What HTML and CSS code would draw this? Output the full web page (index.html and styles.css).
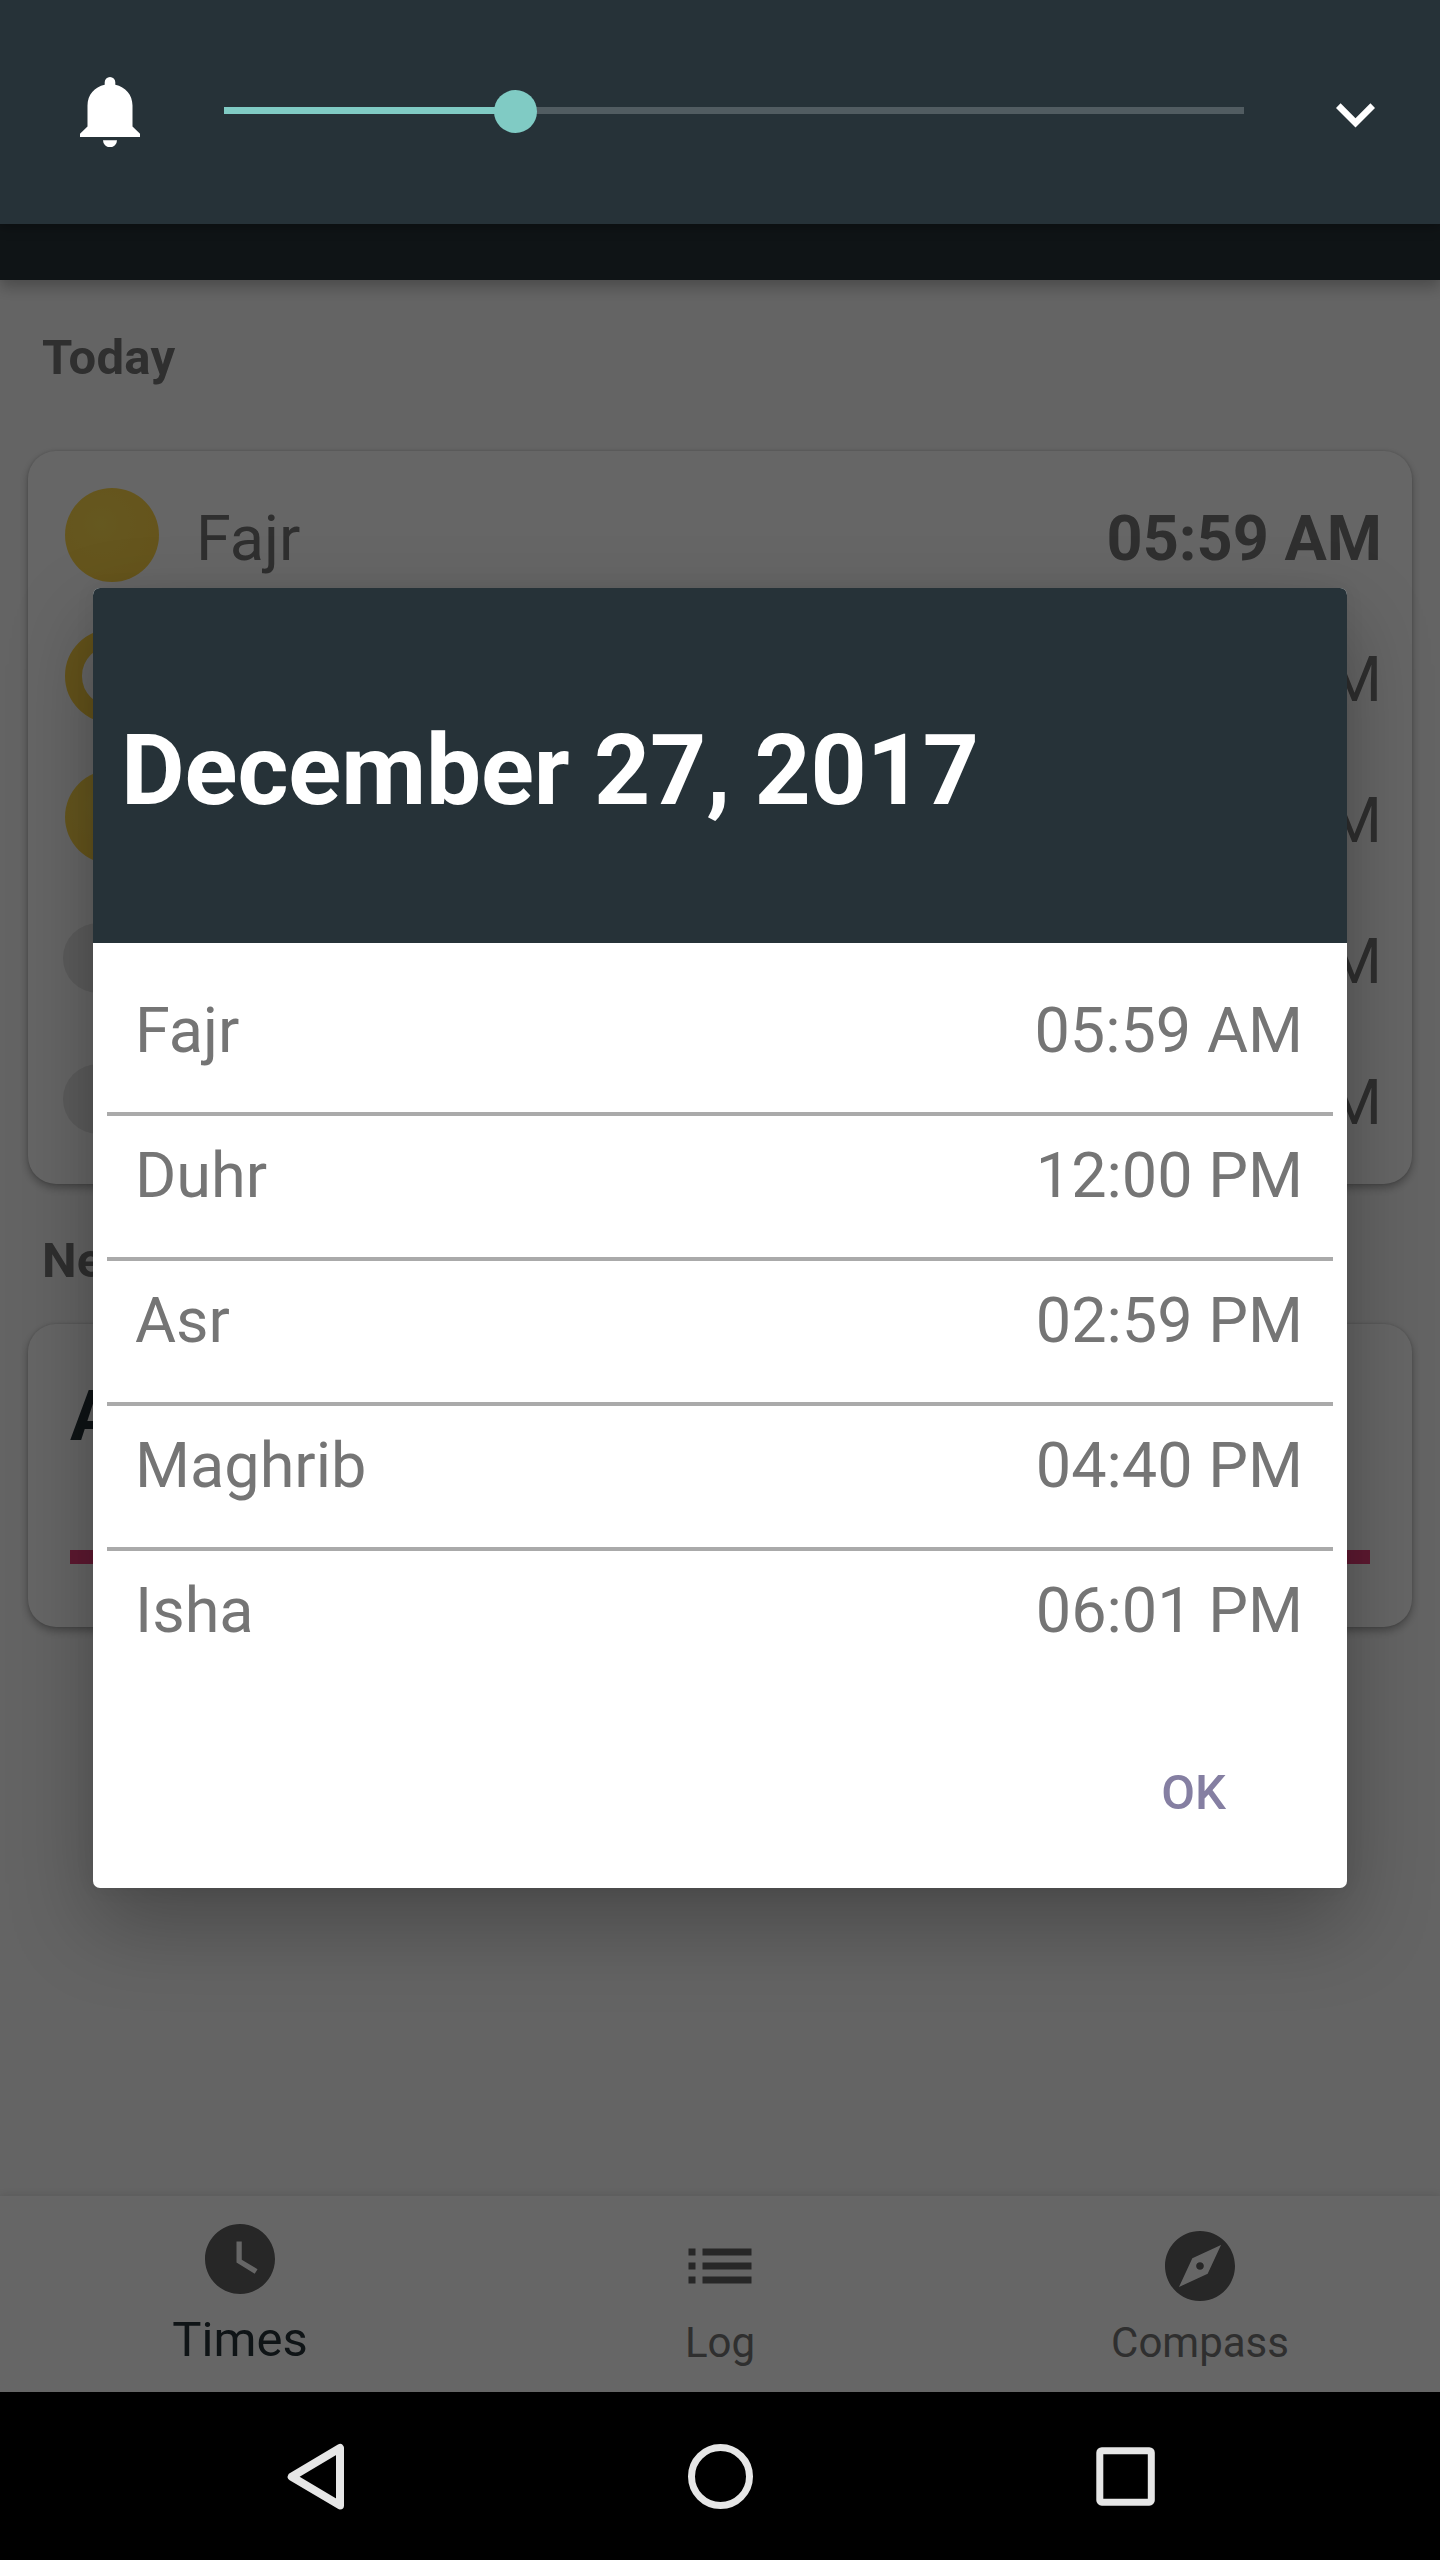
FILE: index.html
```html
<!DOCTYPE html>
<html lang="en">
<head>
<meta charset="utf-8">
<title>Prayer times</title>
<link rel="stylesheet" href="styles.css">
</head>
<body>
<div class="screen">
  <div class="app">
    <header class="toolbar"></header>
    <main class="content">
      <h2 class="section-title">Today</h2>
      <section class="card times-card">
        <div class="time-row current"><span class="mark"><i class="dot full"></i></span><span class="name">Fajr</span><span class="time">05:59 AM</span></div>
        <div class="time-row"><span class="mark"><i class="dot ring"></i></span><span class="time">PM</span></div>
        <div class="time-row"><span class="mark"><i class="dot full"></i></span><span class="time">PM</span></div>
        <div class="time-row"><span class="mark"><i class="dot empty"></i></span><span class="time">PM</span></div>
        <div class="time-row"><span class="mark"><i class="dot empty"></i></span><span class="time">PM</span></div>
      </section>
      <h2 class="section-title next-title">Next</h2>
      <section class="card next-card">
        <div class="next-name">A</div>
        <div class="next-bar"></div>
      </section>
    </main>
    <nav class="tabs">
      <a class="tab active"><svg class="tab-icon" viewBox="0 0 24 24"><path d="M12 2C6.5 2 2 6.5 2 12s4.5 10 10 10 10-4.500 10-10S17.500 2 12 2zm4.200 14.200L11 13V7h1.500v5.200l4.500 2.700-.8 1.300z"/></svg><span>Times</span></a>
      <a class="tab"><svg class="tab-icon" viewBox="0 0 24 24"><path d="M3 13h2v-2H3v2zm0 4h2v-2H3v2zm0-8h2V7H3v2zm4 4h14v-2H7v2zm0 4h14v-2H7v2zM7 7v2h14V7H7z"/></svg><span>Log</span></a>
      <a class="tab"><svg class="tab-icon" viewBox="0 0 24 24"><path d="M12 10.900c-.61 0-1.100.49-1.100 1.100s.49 1.100 1.100 1.100c.61 0 1.100-.49 1.100-1.100s-.49-1.100-1.100-1.100zM12 2C6.480 2 2 6.480 2 12s4.480 10 10 10 10-4.480 10-10S17.520 2 12 2zm2.190 12.190L6 18l3.810-8.190L18 6l-3.810 8.190z"/></svg><span>Compass</span></a>
    </nav>
  </div>
  <footer class="system-nav">
    <svg viewBox="0 0 72 72"><path d="M62 8v57.400L13.700 36.700z" stroke-width="8" stroke-linejoin="round"/></svg>
    <svg viewBox="0 0 72 72"><circle cx="36.500" cy="36.500" r="29"/></svg>
    <svg viewBox="0 0 72 72"><rect x="9.800" y="10.700" width="51.500" height="51.500" rx="2"/></svg>
  </footer>

  <div class="scrim">
    <div class="dialog">
      <div class="dialog-head">December 27, 2017</div>
      <div class="dialog-list">
        <div class="dialog-row"><span>Fajr</span><span>05:59 AM</span></div>
        <div class="dialog-row"><span>Duhr</span><span>12:00 PM</span></div>
        <div class="dialog-row"><span>Asr</span><span>02:59 PM</span></div>
        <div class="dialog-row"><span>Maghrib</span><span>04:40 PM</span></div>
        <div class="dialog-row"><span>Isha</span><span>06:01 PM</span></div>
      </div>
      <div class="dialog-actions"><button class="ok" type="button">OK</button></div>
    </div>
  </div>

  <div class="volume">
    <svg class="bell" viewBox="0 0 60 70"><path d="M23 63.300h14a7 7 0 0 1-14 0zM52.500 49.500V28.500C52.500 18 45.500 10 35.300 7.800V5.300a5.300 5.300 0 0 0-10.600 0v2.500C14.500 10 7.500 18 7.500 28.500V49.500L0 56.800V60h60v-3.200z"/></svg>
    <div class="slider"><div class="slider-fill"></div><div class="slider-thumb"></div></div>
    <svg class="chevron" viewBox="0 0 40 25"><path d="M4.700 0 20 15.300 35.300 0 40 4.700 20 24.700 0 4.700z"/></svg>
  </div>
</div>
</body>
</html>
```
FILE: styles.css
```css
* { box-sizing: border-box; }

body {
  margin: 0;
  background: #000;
  font-family: Roboto, "Liberation Sans", sans-serif;
}

.screen {
  position: relative;
  width: 1440px;
  height: 2560px;
  overflow: hidden;
  display: flex;
  flex-direction: column;
}

.app {
  flex: 1;
  display: flex;
  flex-direction: column;
  background: #fafafa;
  color: #757575;
}

.toolbar {
  height: 280px;
  background: #263238;
  box-shadow: 0 7px 14px rgba(0, 0, 0, .26);
}

.content {
  flex: 1;
  padding: 0 28px;
}

.section-title {
  margin: 0;
  padding: 49px 14px 0;
  height: 171px;
  font-size: 49px;
  line-height: 58px;
  font-weight: 700;
  letter-spacing: .3px;
}

.next-title {
  height: 140px;
  padding-top: 48px;
}

.card {
  background: #fff;
  border-radius: 28px;
  box-shadow: 0 4px 8px rgba(0, 0, 0, .3), 0 0 3px rgba(0, 0, 0, .15);
}

.times-card {
  height: 733px;
  padding: 13px 30px 14px 35px;
}

.time-row {
  display: flex;
  align-items: center;
  height: 141px;
  font-size: 63px;
  line-height: 74px;
}

.mark {
  width: 133px;
  display: flex;
}

.dot {
  width: 94px;
  height: 94px;
  margin-left: 2px;
  border-radius: 50%;
}

.dot.full { background: radial-gradient(circle at 38% 38%, #fddc50 0, #fdd64b 34%, #fbd044 100%); }
.dot.ring { border: 17px solid #fbd044; }

.dot.empty {
  width: 70px;
  height: 70px;
  margin-left: 0;
  background: #e6e6e6;
}

.name,
.time {
  padding-top: 8px;
}

.time { margin-left: auto; }

.current .time { font-weight: 700; }

.next-card {
  height: 303px;
  padding: 51px 42px 0;
}

.next-name {
  height: 175px;
  color: #263238;
  font-size: 70px;
  line-height: 82px;
  font-weight: 700;
}

.next-bar {
  height: 14px;
  background: #ec407a;
}

.tabs {
  height: 196px;
  display: flex;
  background: #fff;
  box-shadow: 0 -2px 8px rgba(0, 0, 0, .1);
}

.tab {
  width: 480px;
  display: flex;
  flex-direction: column;
  align-items: center;
  padding-top: 28px;
  font-size: 42px;
  line-height: 50px;
}

.tab-icon {
  width: 84px;
  height: 84px;
  margin-bottom: 10px;
  fill: #616161;
}

.tab.active {
  padding-top: 21px;
  font-size: 49px;
  line-height: 58px;
  color: #263238;
}

.system-nav {
  position: relative;
  z-index: 2;
  height: 168px;
  display: flex;
  justify-content: space-between;
  align-items: center;
  padding: 0 278px;
  background: #000;
}

.system-nav svg {
  width: 72px;
  height: 72px;
  fill: none;
  stroke: #e6e6e6;
  stroke-width: 7;
}

.scrim {
  position: absolute;
  inset: 0;
  padding: 588px 93px 0;
  background: rgba(0, 0, 0, .6);
}

.dialog {
  height: 1300px;
  border-radius: 7px;
  overflow: hidden;
  background: #fff;
  box-shadow: 0 36px 84px rgba(0, 0, 0, .28), 0 0 20px rgba(0, 0, 0, .06);
}

.dialog-head {
  height: 355px;
  padding: 125px 28px 0;
  background: #263238;
  color: #fff;
  font-size: 98px;
  line-height: 115px;
  font-weight: 700;
  letter-spacing: -.1px;
}

.dialog-list {
  padding: 28px 14px 0;
}

.dialog-row {
  display: flex;
  justify-content: space-between;
  height: 145px;
  padding: 23px 30px 0 28px;
  border-bottom: 4px solid #aaa;
  color: #757575;
  font-size: 63px;
  line-height: 74px;
}

.dialog-row:last-child { border-bottom: 0; }

.dialog-actions {
  display: flex;
  justify-content: flex-end;
  padding: 68px 121px 0;
}

.ok {
  padding: 0;
  border: 0;
  background: none;
  color: #857fa2;
  font: 500 49px/58px Roboto, sans-serif;
}

.volume {
  position: absolute;
  inset: 0 0 auto;
  height: 224px;
  display: flex;
  align-items: center;
  padding: 0 64px 0 80px;
  background: #263238;
  box-shadow: 0 3px 12px rgba(0, 0, 0, .3);
}

.bell {
  width: 60px;
  height: 70px;
  fill: #fff;
}

.slider {
  position: relative;
  width: 1020px;
  height: 7px;
  margin: 0 92px 3px 84px;
  background: #515c61;
}

.slider-fill {
  width: 291px;
  height: 7px;
  background: #80cbc4;
}

.slider-thumb {
  position: absolute;
  left: 270px;
  top: -17px;
  width: 43px;
  height: 43px;
  border-radius: 50%;
  background: #80cbc4;
}

.chevron {
  width: 39px;
  height: 25px;
  margin-top: 6px;
  fill: #fff;
}
```
